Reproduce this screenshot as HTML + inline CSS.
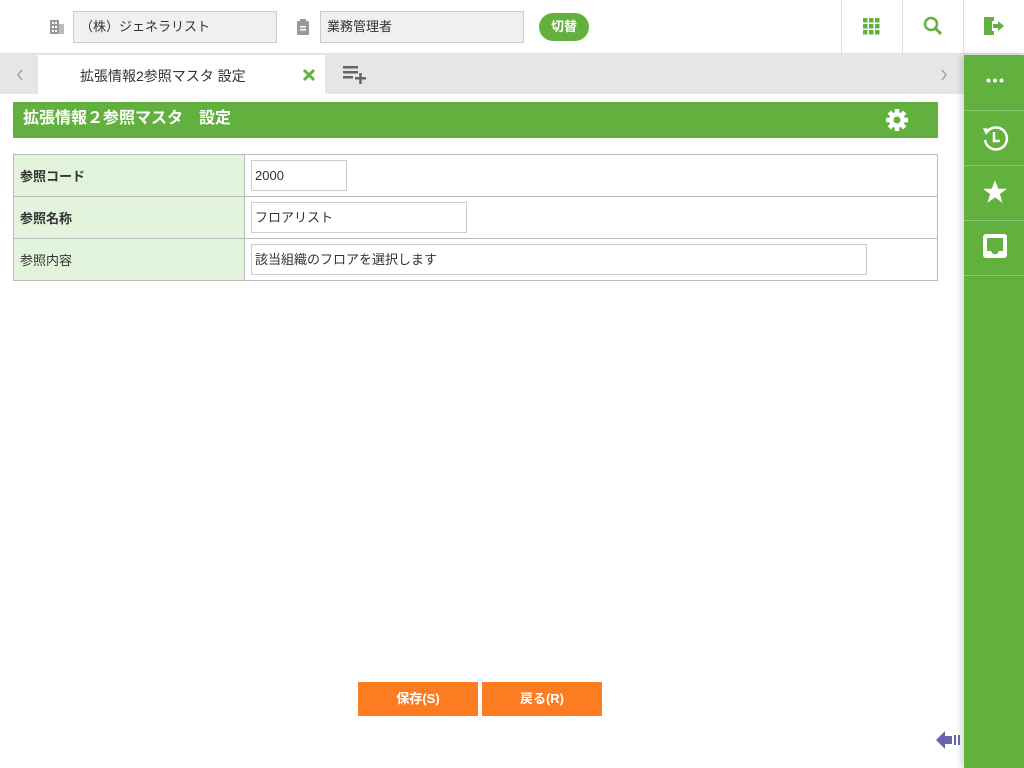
<!DOCTYPE html>
<html><head><meta charset="utf-8"><style>
*{box-sizing:border-box;margin:0;padding:0}
body{width:1024px;height:768px;background:#fff;font-family:"Liberation Sans","Noto Sans CJK JP",sans-serif;position:relative;overflow:hidden;color:#333}
.abs{position:absolute}
.top{left:0;top:0;width:1024px;height:54px;background:#fff;border-bottom:1px solid #ddd;box-shadow:0 1px 3px rgba(0,0,0,.15)}
.fld{height:32px;top:11px;background:#f0f0f0;border:1px solid #ccc;font-size:13px;line-height:30px;padding-left:6px;color:#333}
.btn-sw{left:539px;top:13px;width:50px;height:28px;border-radius:14px;background:#62b13f;color:#fff;font-size:13px;text-align:center;line-height:28px;font-weight:bold}
.vline{top:0;width:1px;height:54px;background:#ddd}
.tabbar{left:0;top:55px;width:964px;height:39px;background:#e6e6e6}
.side{left:964px;top:55px;width:60px;height:713px;background:#62b13f;box-shadow:-3px 0 6px rgba(0,0,0,.15)}
.sdiv{left:964px;width:60px;height:1px;background:#8cc870}
table{position:absolute;left:13px;top:154px;width:925px;border-collapse:collapse}
td{border:1px solid #bbb;height:42px;font-size:13px}
td.l{width:231px;background:#e2f4dc;padding-left:6px}
td.r{padding-left:6px}
.in{border:1px solid #ccc;height:31px;line-height:29px;padding-left:3px;font-size:13px;background:#fff}
.ob{top:682px;width:120px;height:34px;background:#fd7b21;color:#fff;font-size:13px;text-align:center;line-height:34px;font-weight:bold}
</style></head><body>
<div class="abs top"></div>
<svg class="abs" style="left:49px;top:19px" width="16" height="16" viewBox="0 0 16 16"><rect x="1" y="1" width="9" height="14" fill="#999"/><rect x="10" y="5" width="5" height="10" fill="#bbb"/><g fill="#fff"><rect x="3" y="3" width="2" height="2"/><rect x="6" y="3" width="2" height="2"/><rect x="3" y="7" width="2" height="2"/><rect x="6" y="7" width="2" height="2"/><rect x="3" y="11" width="2" height="2"/><rect x="6" y="11" width="2" height="2"/></g></svg>
<div class="abs fld" style="left:73px;width:204px;">（株）ジェネラリスト</div>
<svg class="abs" style="left:296px;top:19px" width="14" height="16" viewBox="0 0 14 16"><rect x="1" y="2" width="12" height="14" rx="1" fill="#999"/><rect x="4" y="0" width="6" height="4" fill="#999"/><rect x="4" y="7" width="6" height="1.5" fill="#fff"/><rect x="4" y="10" width="6" height="1.5" fill="#fff"/></svg>
<div class="abs fld" style="left:320px;width:204px;">業務管理者</div>
<div class="abs btn-sw">切替</div>
<div class="abs vline" style="left:841px"></div>
<div class="abs vline" style="left:902px"></div>
<div class="abs vline" style="left:963px"></div>
<svg class="abs" style="left:863px;top:18px" width="17" height="17" viewBox="0 0 17 17" fill="#62b13f"><rect x="0" y="0" width="4.5" height="4.5"/><rect x="6" y="0" width="4.5" height="4.5"/><rect x="12" y="0" width="4.5" height="4.5"/><rect x="0" y="6" width="4.5" height="4.5"/><rect x="6" y="6" width="4.5" height="4.5"/><rect x="12" y="6" width="4.5" height="4.5"/><rect x="0" y="12" width="4.5" height="4.5"/><rect x="6" y="12" width="4.5" height="4.5"/><rect x="12" y="12" width="4.5" height="4.5"/></svg>
<svg class="abs" style="left:923px;top:16px" width="20" height="20" viewBox="0 0 20 20"><circle cx="8" cy="8" r="6" fill="none" stroke="#62b13f" stroke-width="2.5"/><path d="M12 12L18 18" stroke="#62b13f" stroke-width="3"/></svg>
<svg class="abs" style="left:983px;top:16px" width="22" height="20" viewBox="0 0 22 20"><path d="M1 1H11V5H9V3H5V17H9V15H11V19H1Z M3 1L9 3V19L3 17Z" fill="#62b13f"/><path d="M10 8H15V5L21 10L15 15V12H10Z" fill="#62b13f"/></svg>
<div class="abs tabbar"></div>
<div class="abs" style="left:38px;top:55px;width:287px;height:39px;background:#fff"></div>
<svg class="abs" style="left:16px;top:69px" width="8" height="12" viewBox="0 0 8 12"><path d="M6 1L2 6L6 11" fill="none" stroke="#999" stroke-width="1.3"/></svg>
<svg class="abs" style="left:940px;top:69px" width="8" height="12" viewBox="0 0 8 12"><path d="M2 1L6 6L2 11" fill="none" stroke="#999" stroke-width="1.3"/></svg>
<div class="abs" style="left:80px;top:66px;font-size:14px;color:#333">拡張情報2参照マスタ 設定</div>
<svg class="abs" style="left:302px;top:68px" width="14" height="14" viewBox="0 0 14 14"><path d="M2 2L12 12M12 2L2 12" stroke="#62b13f" stroke-width="3"/></svg>
<svg class="abs" style="left:343px;top:66px" width="24" height="18" viewBox="0 0 24 18" fill="#666"><rect x="0" y="0" width="15" height="2.5"/><rect x="0" y="5" width="15" height="2.5"/><rect x="0" y="10" width="10" height="2.5"/><rect x="12" y="11" width="11" height="2.5"/><rect x="16.2" y="7" width="2.5" height="11"/></svg>
<div class="abs" style="left:13px;top:102px;width:925px;height:36px;background:#62b13f;color:#fff;font-weight:bold;font-size:16px;line-height:34px;padding-left:10px">拡張情報２参照マスタ　設定</div>
<svg class="abs" style="left:885px;top:108px" width="24" height="24" viewBox="0 0 24 24"><g fill="#fff"><circle cx="12" cy="12" r="8"/><g stroke="#fff" stroke-width="4.5"><path d="M12 1V23M1 12H23M4.2 4.2L19.8 19.8M19.8 4.2L4.2 19.8"/></g></g><circle cx="12" cy="12" r="3.5" fill="#62b13f"/></svg>
<table>
<tr><td class="l"><b>参照コード</b></td><td class="r"><div class="in" style="width:96px">2000</div></td></tr>
<tr><td class="l"><b>参照名称</b></td><td class="r"><div class="in" style="width:216px">フロアリスト</div></td></tr>
<tr><td class="l">参照内容</td><td class="r"><div class="in" style="width:616px">該当組織のフロアを選択します</div></td></tr>
</table>
<div class="abs ob" style="left:358px">保存(S)</div>
<div class="abs ob" style="left:482px">戻る(R)</div>
<div class="abs side"></div>
<div class="abs sdiv" style="top:110px"></div>
<div class="abs sdiv" style="top:165px"></div>
<div class="abs sdiv" style="top:220px"></div>
<div class="abs sdiv" style="top:275px"></div>
<svg class="abs" style="left:986px;top:78px" width="18" height="5" viewBox="0 0 18 5" fill="#fff"><circle cx="2.5" cy="2.5" r="2"/><circle cx="9" cy="2.5" r="2"/><circle cx="15.5" cy="2.5" r="2"/></svg>
<svg class="abs" style="left:981px;top:124px" width="28" height="28" viewBox="0 0 28 28"><path d="M6 8A11 11 0 1 1 4 16" fill="none" stroke="#fff" stroke-width="2.5"/><path d="M2 4L9 5L5 11Z" fill="#fff"/><path d="M13 8V17H19" fill="none" stroke="#fff" stroke-width="2.5"/></svg>
<svg class="abs" style="left:982px;top:179px" width="26" height="26" viewBox="0 0 24 24"><path d="M12 1L15 9H23L16.5 14L19 22L12 17L5 22L7.5 14L1 9H9Z" fill="#fff"/></svg>
<svg class="abs" style="left:982px;top:233px" width="26" height="26" viewBox="0 0 26 26"><path d="M4 1H22A3 3 0 0 1 25 4V22A3 3 0 0 1 22 25H4A3 3 0 0 1 1 22V4A3 3 0 0 1 4 1Z M5 5V18H9L11 21H15L17 18H21V5Z" fill="#fff" fill-rule="evenodd"/></svg>
<svg class="abs" style="left:936px;top:729px" width="26" height="22" viewBox="0 0 26 22" fill="#6a64a8"><path d="M0 11L9 2V7H16V15H9V20Z"/><rect x="18" y="6" width="2" height="10"/><rect x="22" y="6" width="2" height="10"/></svg>
</body></html>
